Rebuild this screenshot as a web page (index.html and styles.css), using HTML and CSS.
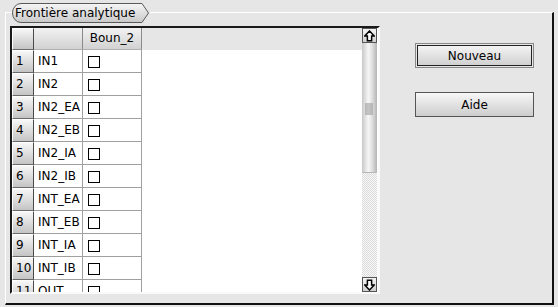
FILE: index.html
```html
<!DOCTYPE html>
<html lang="fr">
<head>
  <meta charset="UTF-8">
  <title>Frontière analytique</title>
  <link rel="stylesheet" href="styles.css">
</head>
<body>
  <div class="group">
    <div class="legend">
      <svg class="legend-shape" width="138" height="20" viewBox="0 0 138 20">
        <defs>
          <linearGradient id="lg" x1="0" y1="0" x2="0" y2="1">
            <stop offset="0" stop-color="#f6f6f6"/>
            <stop offset="1" stop-color="#c9c9c9"/>
          </linearGradient>
        </defs>
        <path d="M9 0.5 H130 L136.5 10 L130 19.5 H9 A8.5 9.5 0 0 1 9 0.5 Z" fill="url(#lg)" stroke="#5a5a5a"/>
      </svg>
      <span class="legend-text">Frontière analytique</span>
    </div>

    <div class="panel">
      <div class="view">
        <div class="grid">
          <div class="hrow">
            <div class="corner"></div>
            <div class="hcell c1"></div>
            <div class="hcell c2">Boun_2</div>
          </div>
          <div class="row"><div class="rh">1</div><div class="cell c1">IN1</div><div class="cell c2"><span class="check"></span></div></div>
          <div class="row"><div class="rh">2</div><div class="cell c1">IN2</div><div class="cell c2"><span class="check"></span></div></div>
          <div class="row"><div class="rh">3</div><div class="cell c1">IN2_EA</div><div class="cell c2"><span class="check"></span></div></div>
          <div class="row"><div class="rh">4</div><div class="cell c1">IN2_EB</div><div class="cell c2"><span class="check"></span></div></div>
          <div class="row"><div class="rh">5</div><div class="cell c1">IN2_IA</div><div class="cell c2"><span class="check"></span></div></div>
          <div class="row"><div class="rh">6</div><div class="cell c1">IN2_IB</div><div class="cell c2"><span class="check"></span></div></div>
          <div class="row"><div class="rh">7</div><div class="cell c1">INT_EA</div><div class="cell c2"><span class="check"></span></div></div>
          <div class="row"><div class="rh">8</div><div class="cell c1">INT_EB</div><div class="cell c2"><span class="check"></span></div></div>
          <div class="row"><div class="rh">9</div><div class="cell c1">INT_IA</div><div class="cell c2"><span class="check"></span></div></div>
          <div class="row"><div class="rh">10</div><div class="cell c1">INT_IB</div><div class="cell c2"><span class="check"></span></div></div>
          <div class="row"><div class="rh">11</div><div class="cell c1">OUT</div><div class="cell c2"><span class="check"></span></div></div>
        </div>
      </div>
      <div class="scrollbar">
        <div class="sb-btn">
          <svg width="11" height="12" viewBox="0 0 11 12"><path d="M5.5 1 L10.2 6 H7.6 V10.8 H3.4 V6 H0.8 Z" fill="#fff" stroke="#000" stroke-width="1.5" stroke-linejoin="miter"/></svg>
        </div>
        <div class="sb-track">
          <div class="sb-thumb"><div class="grip"></div></div>
        </div>
        <div class="sb-btn">
          <svg width="11" height="12" viewBox="0 0 11 12"><path d="M5.5 11 L10.2 6 H7.6 V1.2 H3.4 V6 H0.8 Z" fill="#fff" stroke="#000" stroke-width="1.5" stroke-linejoin="miter"/></svg>
        </div>
      </div>
    </div>

    <div class="actions">
      <button class="btn btn-default">Nouveau</button>
      <button class="btn">Aide</button>
    </div>
  </div>
</body>
</html>
```

FILE: styles.css
```css
body {
  margin: 0;
  background-color: #e6e6e6;
  font-family: "DejaVu Sans", sans-serif;
  font-size: 12px;
  color: #000;
  width: 558px;
  height: 307px;
  overflow: hidden;
}
.group {
  position: relative;
  margin: 12px 0 0 5px;
  width: 549px;
  height: 293px;
  box-sizing: border-box;
  border-top: 1px solid #fff;
  border-left: 1px solid #fff;
  border-right: 2px solid #111;
  border-bottom: 2px solid #111;
  display: flex;
  padding: 13px 0 0 4px;
}
.legend {
  position: absolute;
  top: -10px;
  left: 6px;
  width: 138px;
  height: 20px;
  background-color: #e6e6e6;
}
.legend-shape {
  display: block;
}
.legend-text {
  position: absolute;
  left: 3px;
  top: 2px;
  line-height: 16px;
  white-space: nowrap;
}
.panel {
  width: 370px;
  height: 268px;
  box-sizing: border-box;
  border-top: 2px solid #1a1a1a;
  border-left: 2px solid #1a1a1a;
  border-right: 2px solid #fafafa;
  border-bottom: 2px solid #fafafa;
  display: flex;
  background-color: #fff;
}
.view {
  flex: 1;
  overflow: hidden;
  background-color: #fff;
}
.hrow {
  display: flex;
  height: 22px;
  background-color: #e6e6e6;
}
.corner, .rh {
  width: 22px;
  box-sizing: border-box;
  background: linear-gradient(#f7f7f7, #c4c4c4);
  border-right: 1px solid #4a4a4a;
  border-bottom: 1px solid #6a6a6a;
  border-left: 1px solid #fff;
  border-top: 1px solid #fff;
}
.hcell {
  box-sizing: border-box;
  background: linear-gradient(#f2f2f2, #d2d2d2);
  border-right: 1px solid #8a8a8a;
  border-bottom: 1px solid #b0b0b0;
  line-height: 21px;
  text-align: center;
}
.c1 {
  width: 49px;
}
.c2 {
  width: 59px;
}
.row {
  display: flex;
  height: 23px;
}
.rh {
  line-height: 21px;
  padding-left: 3px;
  white-space: nowrap;
}
.cell {
  box-sizing: border-box;
  border-right: 1px solid #a0a0a0;
  border-bottom: 1px solid #a0a0a0;
  line-height: 23px;
  padding-left: 4px;
  white-space: nowrap;
  overflow: hidden;
}
.cell.c2 {
  display: flex;
  align-items: center;
  padding-left: 5px;
  padding-top: 1px;
}
.check {
  width: 10px;
  height: 10px;
  border: 1px solid #000;
  background-color: #fff;
}
.scrollbar {
  width: 16px;
  display: flex;
  flex-direction: column;
  background-color: #fff;
}
.sb-btn {
  height: 15px;
  width: 15px;
  box-sizing: border-box;
  border: 1px solid #555;
  background: linear-gradient(#f4f4f4, #cfcfcf);
  display: flex;
  align-items: center;
  justify-content: center;
}
.sb-track {
  flex: 1;
  width: 15px;
  background: repeating-conic-gradient(#dcdcdc 0 25%, #f7f7f7 0 50%) 0 0 / 2px 2px;
}
.sb-thumb {
  height: 130px;
  box-sizing: border-box;
  border-right: 1px solid #b8b8b8;
  border-bottom: 1px solid #b8b8b8;
  background: linear-gradient(90deg, #c8c8c8, #f6f6f6 45%, #e2e2e2 70%, #bdbdbd);
  display: flex;
  align-items: center;
  justify-content: center;
}
.grip {
  width: 8px;
  height: 12px;
  margin-top: 2px;
  background: radial-gradient(circle, #8a8a8a 0.6px, transparent 0.8px) 0 0 / 2px 2px;
}
.actions {
  margin-left: 35px;
  padding-top: 17px;
  display: flex;
  flex-direction: column;
  gap: 24px;
}
.btn {
  width: 119px;
  height: 25px;
  font-family: "DejaVu Sans", sans-serif;
  font-size: 12px;
  color: #000;
  border: 1px solid #555;
  border-radius: 0;
  background: linear-gradient(#f7f7f7, #cdcdcd);
  padding: 0;
}
.btn-default {
  box-shadow: inset 0 0 0 1px #e6e6e6, inset 0 0 0 2px #222;
  border-color: #888;
}
```
